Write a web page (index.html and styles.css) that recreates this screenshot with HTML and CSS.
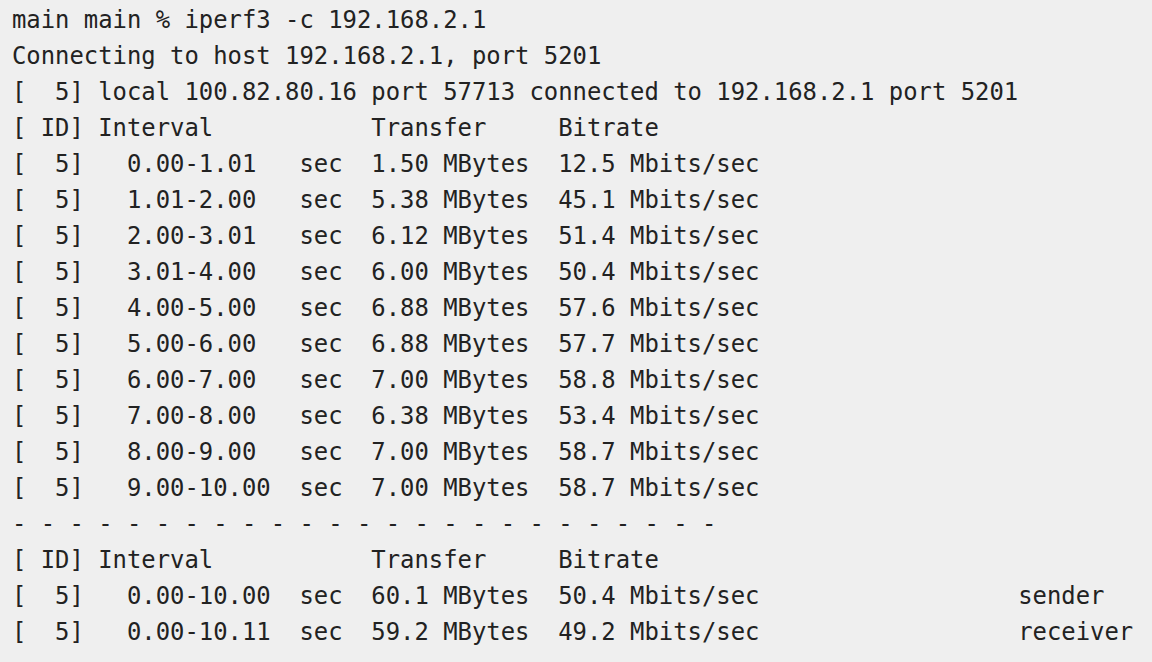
FILE: index.html
```html
<!DOCTYPE html>
<html>
<head>
<meta charset="utf-8">
<link rel="stylesheet" href="styles.css">
</head>
<body>
<pre class="term">main main % iperf3 -c 192.168.2.1
Connecting to host 192.168.2.1, port 5201
[  5] local 100.82.80.16 port 57713 connected to 192.168.2.1 port 5201
[ ID] Interval           Transfer     Bitrate
[  5]   0.00-1.01   sec  1.50 MBytes  12.5 Mbits/sec
[  5]   1.01-2.00   sec  5.38 MBytes  45.1 Mbits/sec
[  5]   2.00-3.01   sec  6.12 MBytes  51.4 Mbits/sec
[  5]   3.01-4.00   sec  6.00 MBytes  50.4 Mbits/sec
[  5]   4.00-5.00   sec  6.88 MBytes  57.6 Mbits/sec
[  5]   5.00-6.00   sec  6.88 MBytes  57.7 Mbits/sec
[  5]   6.00-7.00   sec  7.00 MBytes  58.8 Mbits/sec
[  5]   7.00-8.00   sec  6.38 MBytes  53.4 Mbits/sec
[  5]   8.00-9.00   sec  7.00 MBytes  58.7 Mbits/sec
[  5]   9.00-10.00  sec  7.00 MBytes  58.7 Mbits/sec
- - - - - - - - - - - - - - - - - - - - - - - - -
[ ID] Interval           Transfer     Bitrate
[  5]   0.00-10.00  sec  60.1 MBytes  50.4 Mbits/sec                  sender
[  5]   0.00-10.11  sec  59.2 MBytes  49.2 Mbits/sec                  receiver</pre>
</body>
</html>
```

FILE: styles.css
```css
html, body {
  margin: 0;
  padding: 0;
  background: #efefef;
  height: 100%;
}
.term {
  margin: 0;
  padding: 2px 0 0 12px;
  font-family: "DejaVu Sans Mono", "Liberation Mono", monospace;
  font-size: 23.88px;
  line-height: 36px;
  color: #222222;
  white-space: pre;
}
```
